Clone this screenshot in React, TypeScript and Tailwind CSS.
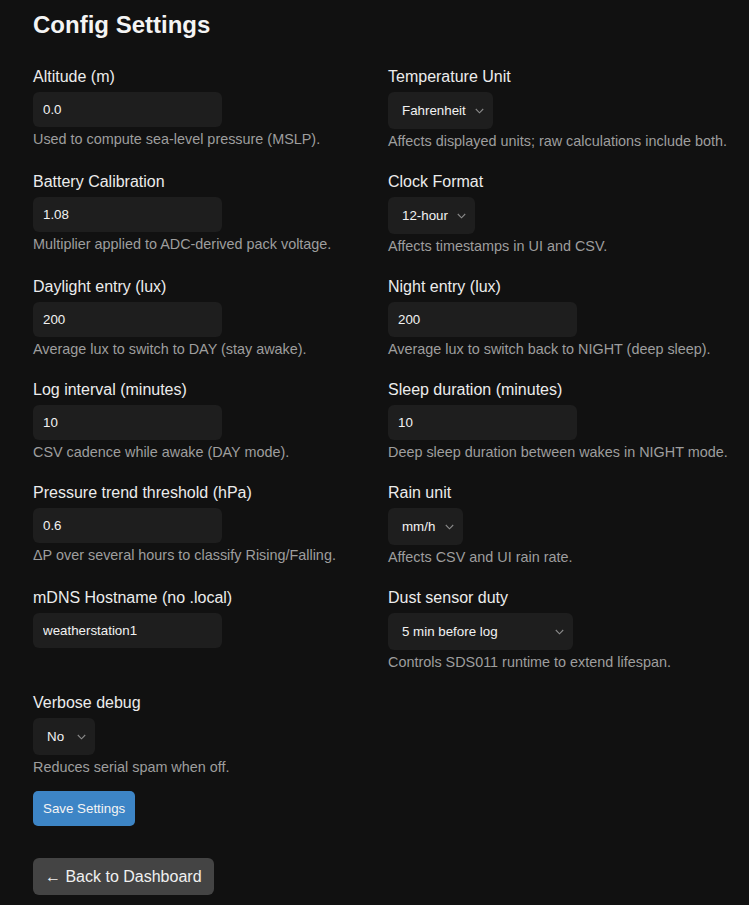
import React from "react";

type Field =
  | { kind: "input"; label: string; value: string; help?: string }
  | { kind: "select"; label: string; value: string; width: string; help?: string };

const Chevron = () => (
  <svg
    className="pointer-events-none absolute right-[9px] top-1/2 -translate-y-1/2"
    width="9"
    height="6"
    viewBox="0 0 9 6"
    fill="none"
  >
    <path d="M0.8 1 L4.5 4.8 L8.2 1" stroke="#8a8a8a" strokeWidth="1.1" />
  </svg>
);

function FieldView({ f }: { f: Field }) {
  return (
    <div className="flex flex-col items-start">
      <label className="text-[16px] leading-[18px] text-[#ececec] mb-[6px]">{f.label}</label>
      {f.kind === "input" ? (
        <input
          defaultValue={f.value}
          className="w-[189px] h-[35px] rounded-[6px] bg-[#1e1e1e] px-[10px] text-[13.33px] text-[#f2f2f2] outline-none"
        />
      ) : (
        <div className={`relative h-[37px] rounded-[6px] bg-[#1e1e1e] ${f.width}`}>
          <span className="absolute left-[14px] top-1/2 -translate-y-1/2 whitespace-nowrap text-[13.33px] text-[#f2f2f2]">
            {f.value}
          </span>
          <Chevron />
        </div>
      )}
      {f.help && (
        <p className="mt-[4px] text-[14.4px] leading-[16px] text-[#9e9e9e] whitespace-nowrap">{f.help}</p>
      )}
    </div>
  );
}

const rows: Field[][] = [
  [
    { kind: "input", label: "Altitude (m)", value: "0.0", help: "Used to compute sea-level pressure (MSLP)." },
    { kind: "select", label: "Temperature Unit", value: "Fahrenheit", width: "w-[105px]", help: "Affects displayed units; raw calculations include both." },
  ],
  [
    { kind: "input", label: "Battery Calibration", value: "1.08", help: "Multiplier applied to ADC-derived pack voltage." },
    { kind: "select", label: "Clock Format", value: "12-hour", width: "w-[87px]", help: "Affects timestamps in UI and CSV." },
  ],
  [
    { kind: "input", label: "Daylight entry (lux)", value: "200", help: "Average lux to switch to DAY (stay awake)." },
    { kind: "input", label: "Night entry (lux)", value: "200", help: "Average lux to switch back to NIGHT (deep sleep)." },
  ],
  [
    { kind: "input", label: "Log interval (minutes)", value: "10", help: "CSV cadence while awake (DAY mode)." },
    { kind: "input", label: "Sleep duration (minutes)", value: "10", help: "Deep sleep duration between wakes in NIGHT mode." },
  ],
  [
    { kind: "input", label: "Pressure trend threshold (hPa)", value: "0.6", help: "ΔP over several hours to classify Rising/Falling." },
    { kind: "select", label: "Rain unit", value: "mm/h", width: "w-[75px]", help: "Affects CSV and UI rain rate." },
  ],
  [
    { kind: "input", label: "mDNS Hostname (no .local)", value: "weatherstation1" },
    { kind: "select", label: "Dust sensor duty", value: "5 min before log", width: "w-[185px]", help: "Controls SDS011 runtime to extend lifespan." },
  ],
  [{ kind: "select", label: "Verbose debug", value: "No", width: "w-[62px]", help: "Reduces serial spam when off." }],
];

export default function App() {
  return (
    <div
      className="min-h-screen w-full bg-[#111111] px-[33px] pt-[9px] pb-[10px]"
      style={{ fontFamily: '"Liberation Sans", Arial, sans-serif' }}
    >
      <h1 className="text-[24px] leading-[32px] font-bold text-[#f4f4f4]">Config Settings</h1>
      <div className="mt-[27px] grid grid-cols-[328px_1fr] gap-x-[27px] gap-y-[24px]">
        {rows.map((r, i) => (
          <React.Fragment key={i}>
            {r.map((f, j) => (
              <FieldView key={j} f={f} />
            ))}
            {r.length === 1 && <div />}
          </React.Fragment>
        ))}
      </div>
      <button className="mt-[16px] block h-[35px] rounded-[5px] bg-[#3d85c6] px-[10px] text-[13.33px] text-[#f4f4f4]">
        Save Settings
      </button>
      <button className="mt-[32px] block h-[37px] rounded-[6px] bg-[#444444] pl-[12px] pr-[12px] text-[16px] text-[#f0f0f0]">
        ← Back to Dashboard
      </button>
    </div>
  );
}
